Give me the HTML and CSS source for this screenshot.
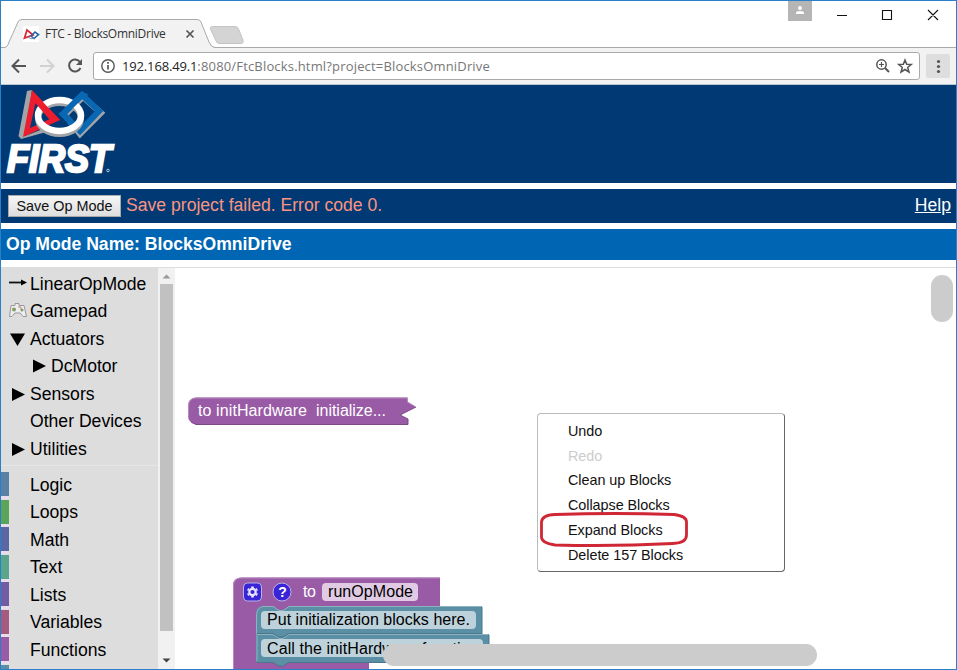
FILE: index.html
```html
<!DOCTYPE html>
<html lang="en">
<head>
<meta charset="utf-8">
<title>FTC - BlocksOmniDrive</title>
<link rel="stylesheet" href="styles.css">
</head>
<body>
<div class="window">
  <div class="titlebar">
    <svg class="tab-shape" width="250" height="47" viewBox="1 1 250 47">
      <path d="M1 47.5H4C7 47.5 8 45 9 42L18 22Q19 19.500 22 19.500H197Q200 19.500 201 22L209 42Q211 47.500 215 47.500V48H1Z" fill="#f2f2f2"/>
      <path d="M1 47.500H4C7 47.500 8 45 9 42L18 22Q19 19.500 22 19.500H197Q200 19.500 201 22L209 42Q211 47.500 215 47.500H251" fill="none" stroke="#aaa"/>
      <path d="M213 26.500H235Q237.500 26.500 238.500 29L243 40Q244 43.500 241 43.500H219Q217 43.500 216 41L210.500 29Q209.500 26.500 213 26.500Z" fill="#d4d4d4" stroke="#c4c4c4"/>
      <path d="M23 26H39V42H23Z" fill="#fff"/>
      <path d="M24.500 38L27 30L33 35Z" fill="none" stroke="#d8283a" stroke-width="1.800"/>
      <path d="M31 36L35 32L38.500 34.500L34 38.500L31 36" fill="none" stroke="#2165aa" stroke-width="1.600"/>
      <path d="M28 37Q31 40 34 38" fill="none" stroke="#7b92ad"/>
      <path d="M186.500 30.500L193.500 37.500M193.500 30.500L186.500 37.500" stroke="#555" stroke-width="1.700"/>
    </svg>
    <span class="tab-title">FTC - BlocksOmniDrive</span>
    <svg class="controls" width="168" height="30" viewBox="788 1 168 30">
      <path d="M788 1h24v20h-24z" fill="#b5b5b5"/>
      <circle cx="800" cy="8" r="2" fill="#fff"/><path d="M796 14V13Q796 11 800 11T804 13V14Z" fill="#fff"/>
      <path d="M837 15.500H847M882.500 10.500H891.500V19.500H882.500ZM928 10L938 20M938 10L928 20" fill="none" stroke="#111" stroke-width="1.100"/>
    </svg>
  </div>
  <div class="toolbar">
    <svg class="nav" width="92" height="36" viewBox="1 48 92 36" fill="none" stroke-width="2">
      <path d="M26 66H13M19 59.500L12.500 66L19 72.500" stroke="#555"/>
      <path d="M40 66H53M47 59.500L53.500 66L47 72.500" stroke="#d2d2d2"/>
      <path d="M80 62A6 6 0 1 0 80.500 68" stroke="#555"/><path d="M82 59V65H76Z" fill="#555"/>
    </svg>
    <div class="address">
      <svg width="28" height="26" viewBox="94 53 28 26"><circle cx="108" cy="66" r="6.200" fill="none" stroke="#555" stroke-width="1.400"/><path d="M108 65V69.500M108 62V63.700" stroke="#555" stroke-width="1.700"/></svg>
      <span class="url"><b>192.168.49.1</b>:8080/FtcBlocks.html?project=BlocksOmniDrive</span>
      <svg class="actions" width="48" height="26" viewBox="871 53 48 26" fill="none" stroke="#555" stroke-width="1.500"><circle cx="881.500" cy="64.500" r="4.700"/><path d="M885 68L889 72" stroke-width="2"/><path d="M879 64.500H884M881.500 62V67" stroke-width="1.200"/><path d="M905 60L906.700 64.200L911.300 64.500L907.700 67.500L909 72L905 69.500L901 72L902.300 67.500L898.700 64.500L903.300 64.200Z"/></svg>
    </div>
    <svg class="menu-button" width="24" height="24" viewBox="0 0 24 24"><rect width="24" height="24" rx="2" fill="#dedede"/><g fill="#555"><circle cx="12.500" cy="7.500" r="1.600"/><circle cx="12.500" cy="12.500" r="1.600"/><circle cx="12.500" cy="17.500" r="1.600"/></g></svg>
  </div>
  <header class="banner">
    <svg width="125" height="98" viewBox="1 85 125 98">
      <path d="M27 91L32 90L25 136L48 127L50 131L21 139L18.500 136Z" fill="#a2a5a8"/>
      <path d="M32 90L60 120L23 137ZM35.500 103L30 128L50 119Z" fill="#ed1c2e" fill-rule="evenodd"/>
      <path d="M83 97L65 115L80 134L101 113Z" fill="none" stroke="#a2a5a8" stroke-width="6"/>
      <path d="M82 95L63 114L80 131L99 111Z" fill="none" stroke="#0968b3" stroke-width="6"/>
      <ellipse cx="59.500" cy="118.500" rx="21.500" ry="15.500" fill="none" stroke="#a2a5a8" stroke-width="6"/>
      <ellipse cx="59.500" cy="115.500" rx="21.500" ry="15.500" fill="none" stroke="#fff" stroke-width="6.500"/>
      <path d="M31.500 90L60 120L52 122.500L34.500 102Z" fill="#ed1c2e"/>
      <path d="M87 97L82 95L63 114L71 122" fill="none" stroke="#0968b3" stroke-width="6"/>
      <text class="first" x="7" y="172" textLength="104" lengthAdjust="spacingAndGlyphs">FIRST</text>
      <circle cx="108" cy="170.500" r="1.300" fill="none" stroke="#b6c7dc"/>
    </svg>
  </header>
  <div class="actionbar">
    <button class="save">Save Op Mode</button>
    <span class="error">Save project failed. Error code 0.</span>
    <a class="help">Help</a>
  </div>
  <div class="namebar">Op Mode Name: BlocksOmniDrive</div>
  <main class="editor">
    <nav class="toolbox">
      <div class="row"><svg width="29" height="27" viewBox="0 0 29 27"><path d="M8 11.500H22" stroke="#111" stroke-width="1.800"/><path d="M20 8.500L26 11.500L20 14.500Z"/></svg>LinearOpMode</div>
      <div class="row"><svg width="29" height="27" viewBox="0 0 29 27"><path d="M10 7.500H14V5.500H18V7.500H23L25.500 18.500H22L19 15H14L11 18.500H8.500Z" fill="#eee" stroke="#999"/><circle cx="13" cy="11.500" r="2" fill="#849d66"/><path d="M17 9H20V12" stroke="#bd8870" fill="none"/><circle cx="21" cy="12" r="1.500" fill="#829e75"/></svg>Gamepad</div>
      <div class="row"><svg width="29" height="27" viewBox="0 0 29 27"><path d="M9 7.500H24L16.500 20Z"/></svg>Actuators</div>
      <div class="row child"><svg width="29" height="27" viewBox="0 0 29 27"><path d="M11 6.500V19.500L24 13Z"/></svg>DcMotor</div>
      <div class="row"><svg width="29" height="27" viewBox="0 0 29 27"><path d="M11 7V20L24 13.500Z"/></svg>Sensors</div>
      <div class="row"><i class="blank"></i>Other Devices</div>
      <div class="row"><svg width="29" height="27" viewBox="0 0 29 27"><path d="M11 7V20L24 13.500Z"/></svg>Utilities</div>
      <div class="separator"></div>
      <div class="row"><i class="color logic"></i>Logic</div>
      <div class="row"><i class="color loops"></i>Loops</div>
      <div class="row"><i class="color math"></i>Math</div>
      <div class="row"><i class="color text"></i>Text</div>
      <div class="row"><i class="color lists"></i>Lists</div>
      <div class="row"><i class="color variables"></i>Variables</div>
      <div class="row"><i class="color functions"></i>Functions</div>
      <div class="row"><i class="color extra"></i></div>
    </nav>
    <div class="scrollbar"><svg width="17" height="17" viewBox="0 0 17 17"><path d="M4.500 10.500L8.500 6.500L12.500 10.500Z" fill="#999"/></svg><i class="thumb"></i><svg width="17" height="17" viewBox="0 0 17 17"><path d="M4.500 6.500H12.500L8.500 10.500Z" fill="#444"/></svg></div>
    <section class="workspace">
      <svg class="canvas" width="781" height="401" viewBox="175 268 781 401">
        <path d="M196 397.500H407.500V402L416 407L400 415L408 419V424.500H196Q188 423 188 415V406Q188 398 196 397.500Z" fill="#995ba5"/>
        <path d="M188.500 416V406Q189 398 196 398H407.500V402L415 406.500" fill="none" stroke="#b68abc"/>
        <path d="M191 422L196 424.500H408V419L400 415L416 407" fill="none" stroke="#7c4986"/>
        <g class="block-text"><text x="198" y="416" textLength="109" fill="#fff">to initHardware</text><text x="316" y="416" textLength="70" fill="#fff">initialize...</text></g>
        <path d="M241 577.500H440V606H290V615H264V662H369V669H233V585Q233 578 241 577.500Z" fill="#995ba5"/>
        <path d="M233.500 669V585.500Q234 578 241 578H439.500" fill="none" stroke="#b889c0"/>
        <rect x="243.500" y="583" width="18" height="18" rx="4" fill="#3a24d8" stroke="#b9b2ea"/>
        <circle cx="282" cy="592" r="9" fill="#3a24d8" stroke="#b9b2ea"/>
        <circle cx="252.500" cy="592" r="3.200" fill="none" stroke="#e8e4fb" stroke-width="2.200"/>
        <path d="M252.500 586.500V588M252.500 596V597.500M247.700 589.200L249 590M256 594L257.300 594.800M247.700 594.800L249 594M256 590L257.300 589.200" stroke="#e8e4fb" stroke-width="2.600"/>
        <text class="question" x="278.200" y="597">?</text>
        <text class="block-text" x="303" y="597" textLength="13" fill="#fff">to</text>
        <rect x="322" y="583" width="96" height="18" rx="4" fill="#e1cbe4"/>
        <text class="block-text" x="328" y="597" textLength="85">runOpMode</text>
        <path d="M264 606H273L279 610H283L289 606H482V634H489V662H289L283 666H279L273 662H256V614Q256 606 264 606Z" fill="#5b8fa6"/>
        <path d="M256.500 634V615Q257 606.500 264 606.500H273L279 610.500H283L289 606.500H481.500M257 661V634.500H273L279 638.500H283L289 634.500H488" fill="none" stroke="#8db2c2"/>
        <path d="M482 607V634M257 633.500H273L279 637H283L289 633.500H482M489 635V662M257 662.500H273L279 666H283L289 662.500H489" fill="none" stroke="#49768a"/>
        <rect x="261" y="611" width="215" height="18" rx="4" fill="#bdd2db"/>
        <rect x="261" y="639" width="222" height="18" rx="4" fill="#bdd2db"/>
        <text class="block-text" x="267" y="625" textLength="203">Put initialization blocks here.</text>
        <text class="block-text" x="267" y="654" textLength="216">Call the initHardware function.</text>
        <rect x="383" y="644" width="434" height="22" rx="11" fill="#ccc"/>
        <rect x="931" y="275" width="22" height="47" rx="11" fill="#ccc"/>
      </svg>
      <div class="context-menu">
        <div>Undo</div><div class="disabled">Redo</div><div>Clean up Blocks</div><div>Collapse Blocks</div><div>Expand Blocks</div><div>Delete 157 Blocks</div>
        <svg class="highlight" width="152" height="38" viewBox="538 510 152 38"><path d="M555 514.500Q615 512.500 674 514.500Q686.500 516 686.500 522V535Q686.500 543 673 543.500Q615 546.500 555 545Q541.500 543 541.500 537V522Q542 515 555 514.500Z" fill="none" stroke="#cf2734" stroke-width="2.800"/></svg>
      </div>
    </section>
  </main>
</div>
</body>
</html>
```

FILE: styles.css
```css
* { box-sizing: border-box; }
body { margin: 0; font-family: "Liberation Sans", Arial, sans-serif; overflow: hidden; }
svg { display: block; flex: none; }
.window { width: 957px; height: 670px; border: 1px solid #2a7fc9; background: #fff; display: flex; flex-direction: column; }
.titlebar { height: 47px; flex: none; display: flex; justify-content: space-between; position: relative; border-bottom: 1px solid #aaa; }
.tab-shape { margin-bottom: -1px; z-index: 1; }
.tab-title { position: absolute; z-index: 2; left: 44px; top: 24px; font: 12px/18px "Open Sans", sans-serif; letter-spacing: -0.28px; color: #333; white-space: nowrap; }
.toolbar { height: 37px; flex: none; display: flex; align-items: center; background: #f2f2f2; border-bottom: 1px solid #b9c6d3; }
.address { width: 827px; height: 28px; border: 1px solid #aaa; border-radius: 3px; background: #fff; display: flex; align-items: center; }
.url { font: 13px/24px "Open Sans", sans-serif; letter-spacing: 0.17px; color: #777; white-space: nowrap; }
.url b { font-weight: 400; letter-spacing: -0.15px; color: #222; }
.actions { margin-left: auto; }
.menu-button { margin-left: 6px; }
.banner { height: 98px; flex: none; background: #003974; }
.first { font: italic 900 38px "Liberation Sans", Arial, sans-serif; fill: #fff; stroke: #fff; stroke-width: 2.4px; }
.actionbar { height: 34px; flex: none; margin-top: 6px; padding: 0 5px 0 7px; background: #003974; display: flex; align-items: center; }
.save { width: 113px; height: 22px; padding: 0; margin-right: 5px; border: 1px solid #aaa; background: linear-gradient(#f6f6f6, #dedede); font: 14.4px/20px "Liberation Sans", Arial, sans-serif; color: #111; white-space: nowrap; }
.error { font-size: 17.6px; line-height: 32px; color: #fa9480; position: relative; top: -1px; }
.help { margin-left: auto; color: #fff; font-size: 17.6px; text-decoration: underline; position: relative; top: -1px; }
.namebar { height: 31px; flex: none; margin-top: 6px; padding-left: 5px; background: #0066b3; color: #fff; font-size: 17.6px; font-weight: 700; line-height: 30px; }
.editor { height: 402px; margin-top: 7px; border-top: 1px solid #ddd; display: flex; overflow: hidden; }
.toolbox { width: 157px; height: 402px; margin-top: -1px; flex: none; background: #ddd; padding-top: 3.5px; overflow: hidden; }
.row { height: 27.5px; display: flex; font-size: 17.6px; line-height: 27px; white-space: nowrap; }
.child { padding-left: 21px; }
.blank { width: 29px; }
.separator { height: 1px; margin: 2px 0 5.5px; background: #e6e6e6; }
.color { width: 8px; height: 27px; margin: 0.5px 21px 0 0; border-bottom: 3px solid #eadcea; flex: none; }
.logic { background: #5b80a5; }
.loops { background: #5ba55b; }
.math { background: #5b67a5; }
.text { background: #5ba58c; }
.lists { background: #745ba5; }
.variables { background: #a55b80; }
.functions { background: #995ba5; }
.extra { background: #5b8fa6; }
.scrollbar { width: 17px; height: 401px; flex: none; background: #f1f1f1; display: flex; flex-direction: column; justify-content: space-between; }
.thumb { width: 13px; height: 347px; margin: -1px 2px auto; background: #c1c1c1; }
.workspace { flex: 1; position: relative; background: #fff; }
.block-text { font: 16px "Liberation Sans", Arial, sans-serif; }
.question { font: bold 14px "Liberation Sans", Arial, sans-serif; fill: #fff; }
.context-menu { position: absolute; left: 362px; top: 145px; width: 248px; height: 159px; border: 1px solid; border-color: #bbb #666 #666 #bbb; border-radius: 4px; background: #fff; padding: 5px 0 0 30px; font-size: 14.4px; line-height: 24.7px; letter-spacing: -0.05px; color: #111; }
.disabled { color: #ccc; }
.highlight { position: absolute; left: 0; top: 96px; }
```
